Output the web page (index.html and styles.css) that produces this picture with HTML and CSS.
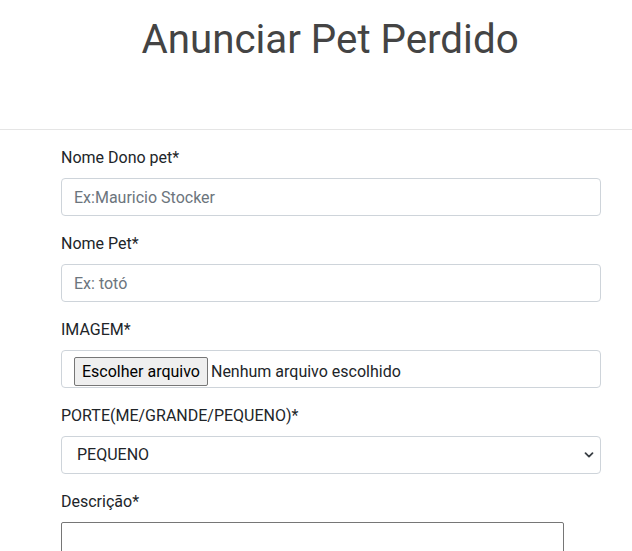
FILE: index.html
```html
<!DOCTYPE html>
<html lang="pt-BR">
<head>
<meta charset="utf-8">
<title>Anunciar Pet Perdido</title>
<link rel="stylesheet" href="styles.css">
</head>
<body>
<header class="page-header">
  <h1 class="page-title">Anunciar Pet Perdido</h1>
</header>
<hr class="divider">
<form class="pet-form">
  <div class="field">
    <label class="field-label" for="dono">Nome Dono pet*</label>
    <input class="form-control" id="dono" type="text" placeholder="Ex:Mauricio Stocker">
  </div>
  <div class="field">
    <label class="field-label" for="pet">Nome Pet*</label>
    <input class="form-control" id="pet" type="text" placeholder="Ex: totó">
  </div>
  <div class="field">
    <label class="field-label">IMAGEM*</label>
    <div class="form-control file-control">
      <span class="file-button">Escolher arquivo</span>
      <span class="file-name">Nenhum arquivo escolhido</span>
    </div>
  </div>
  <div class="field">
    <label class="field-label" for="porte">PORTE(ME/GRANDE/PEQUENO)*</label>
    <div class="select-wrap">
      <select class="form-control form-select" id="porte">
        <option>PEQUENO</option>
        <option>MÉDIO</option>
        <option>GRANDE</option>
      </select>
      <svg class="select-chevron" width="10" height="8" viewBox="0 0 10 8" aria-hidden="true">
        <path d="M1.5 2.2 L5 5.6 L8.5 2.2" fill="none" stroke="#3a3f45" stroke-width="1.8" stroke-linecap="round" stroke-linejoin="round"/>
      </svg>
    </div>
  </div>
  <div class="field">
    <label class="field-label" for="desc">Descrição*</label>
    <textarea class="description" id="desc" rows="4"></textarea>
  </div>
</form>
</body>
</html>
```
FILE: styles.css
```css
* { box-sizing: border-box; }
html, body { margin: 0; padding: 0; }
body {
  font-family: Roboto, "Liberation Sans", sans-serif;
  font-size: 16px;
  line-height: 1.5;
  color: #212529;
  background: #fff;
  overflow: hidden;
}
.page-header {
  height: 129px;
  padding-top: 16px;
  padding-left: 28px;
  text-align: center;
}
.page-title {
  margin: 0;
  font-size: 40.3px;
  font-weight: 400;
  line-height: 1.2;
  color: #444;
}
.divider {
  margin: 0;
  border: 0;
  border-top: 1px solid #e5e5e5;
}
.pet-form {
  width: 540px;
  margin-left: 61px;
  padding-top: 16px;
}
.field {
  display: flex;
  flex-direction: column;
  margin-bottom: 16px;
}
.field-label {
  margin-bottom: 8px;
  line-height: 24px;
}
.form-control {
  display: block;
  width: 100%;
  height: 38px;
  padding: 6px 12px;
  font-family: inherit;
  font-size: 16px;
  line-height: 24px;
  color: #212529;
  background: #fff;
  border: 1px solid #ced4da;
  border-radius: 4px;
}
.form-control::placeholder { color: #6c757d; opacity: 1; }
.file-control {
  display: flex;
  align-items: flex-start;
  padding: 6px 12px 0;
  color: #495057;
}
.file-button {
  display: inline-block;
  height: 29px;
  line-height: 25px;
  padding: 1px 7px;
  margin-right: 3px;
  color: #000;
  background: #efefef;
  border: 1px solid #767676;
  border-radius: 2px;
}
.file-name {
  color: #212529;
  line-height: 29px;
}
.select-wrap {
  position: relative;
}
.form-select {
  appearance: none;
  -webkit-appearance: none;
  padding-left: 15px;
}
.select-chevron {
  position: absolute;
  right: 7px;
  top: 15px;
  pointer-events: none;
}
.description {
  display: block;
  width: 503px;
  height: 60px;
  border: 1px solid #767676;
  border-radius: 2px;
  font-family: inherit;
}
```
